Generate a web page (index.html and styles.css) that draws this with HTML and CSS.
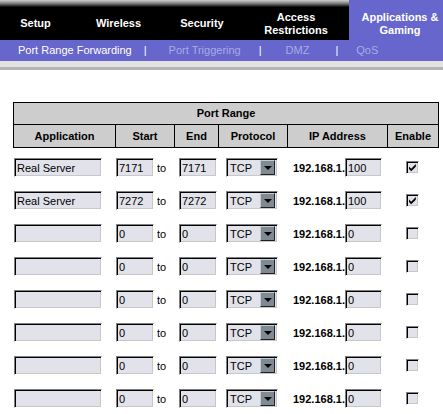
FILE: index.html
```html
<!DOCTYPE html>
<html lang="en">
<head>
    <meta charset="UTF-8">
    <title>Port Range Forwarding</title>
    <link rel="stylesheet" href="styles.css">
</head>
<body>

    <!-- 상단 메뉴 -->
    <div class="topnav">
        <div class="tab t1">Setup</div>
        <div class="tab t2">Wireless</div>
        <div class="tab t3">Security</div>
        <div class="tab t4">Access<br>Restrictions</div>
        <div class="tab active">Applications &amp;<br>Gaming</div>
    </div>
    <div class="subnav">
        <span class="item cur">Port Range Forwarding</span>
        <span class="sep s1">|</span>
        <span class="item i2">Port Triggering</span>
        <span class="sep s2">|</span>
        <span class="item i3">DMZ</span>
        <span class="sep s3">|</span>
        <span class="item i4">QoS</span>
    </div>
    <div class="strip"></div>

    <!-- 포트 포워딩 테이블 -->
    <div class="forward">
        <div class="head">
            <div class="title">Port Range</div>
            <div class="cols">
                <div>Application</div>
                <div>Start</div>
                <div>End</div>
                <div>Protocol</div>
                <div>IP Address</div>
                <div>Enable</div>
            </div>
        </div>
        <div id="rows"></div>
    </div>

    <script>
        const rules = [
            {app: "Real Server", start: "7171", end: "7171", ip: "100", on: true},
            {app: "Real Server", start: "7272", end: "7272", ip: "100", on: true},
            {app: "", start: "0", end: "0", ip: "0", on: false},
            {app: "", start: "0", end: "0", ip: "0", on: false},
            {app: "", start: "0", end: "0", ip: "0", on: false},
            {app: "", start: "0", end: "0", ip: "0", on: false},
            {app: "", start: "0", end: "0", ip: "0", on: false},
            {app: "", start: "0", end: "0", ip: "0", on: false}
        ];
        const tick = `<svg width="9" height="9" viewBox="0 0 9 9"><path d="M1 3.5 L3.2 5.7 L7.8 1 L7.8 3.8 L3.2 8.3 L1 6.1 Z" fill="#000"/></svg>`;

        let output = "";
        rules.forEach(r => {
            output += `<div class="row">
                <div class="c-app"><input class="field app" type="text" value="${r.app}"></div>
                <div class="c-start"><input class="field port" type="text" value="${r.start}"><span class="to">to</span></div>
                <div class="c-end"><input class="field port" type="text" value="${r.end}"></div>
                <div class="c-proto"><div class="select"><span class="val">TCP</span><span class="arrow"></span></div></div>
                <div class="c-ip"><b>192.168.1.</b><input class="field ip" type="text" value="${r.ip}"></div>
                <div class="c-en"><span class="check">${r.on ? tick : ""}</span></div>
            </div>`;
        });
        document.querySelector("#rows").innerHTML = output;
    </script>

</body>
</html>
```

FILE: styles.css
```css
html, body {
    overflow: hidden;
}
body {
    margin: 0;
    font-family: "Liberation Sans", Arial, sans-serif;
    font-size: 11px;
    background: #fff;
}

/* 상단 탭 */
.topnav {
    display: flex;
    height: 40px;
    width: 460px;
}
.tab {
    display: flex;
    justify-content: center;
    align-items: center;
    padding-top: 7px;
    box-sizing: border-box;
    color: #fff;
    font-weight: bold;
    line-height: 13px;
    text-align: center;
    background: linear-gradient(#d0d0d0 0, #8a8a8a 3px, #2a2a2a 6px, #000 7px);
}
.t1 { width: 71px; }
.t2 { width: 95px; }
.t3 { width: 72px; }
.t4 { width: 111px; padding-left: 5px; }
.tab.active {
    width: 102px;
    background: #6666cc;
}

.subnav {
    display: flex;
    height: 21px;
    line-height: 21px;
    background: #6666cc;
    color: #aaaae6;
    white-space: nowrap;
}
.subnav .cur {
    color: #fff;
    margin-left: 18px;
}
.sep { color: #fff; }
.s1 { margin-left: 12px; }
.i2 { margin-left: 22px; }
.s2 { margin-left: 18px; }
.i3 { margin-left: 24px; }
.s3 { margin-left: 26px; }
.i4 { margin-left: 18px; }

.strip {
    height: 6px;
    background: #e2e2e2;
    border-bottom: 3px solid #b4b4b4;
}

/* 테이블 */
.forward {
    margin: 32px 0 0 13px;
    width: 426px;
}
.head {
    border: 1px solid #000;
    background: #cdcdcd;
    font-weight: bold;
}
.title {
    height: 21px;
    line-height: 21px;
    text-align: center;
    border-bottom: 1px solid #000;
}
.cols {
    display: grid;
    grid-template-columns: 101px 59px 44px 69px 100px 51px;
    height: 22px;
    line-height: 22px;
    text-align: center;
}
.cols > div + div {
    border-left: 1px solid #000;
}

#rows {
    margin-top: 3px;
}
.row {
    display: grid;
    grid-template-columns: 101px 59px 44px 69px 100px 51px;
    height: 33px;
    padding-left: 1px;
}
.row > div {
    display: flex;
    align-items: center;
    box-sizing: border-box;
}
.c-start { padding-left: 1px; }
.c-end { padding-left: 5px; }
.c-proto { padding-left: 8px; }
.c-ip { padding-left: 6px; }
.c-en { padding-left: 19px; }

/* 입력 필드 (윈도우 inset 스타일) */
.field, .select, .check {
    box-sizing: border-box;
    background: #e2e2ea;
    border-top: 1px solid #808080;
    border-left: 1px solid #808080;
    border-right: 1px solid #fff;
    border-bottom: 1px solid #fff;
    box-shadow: inset 1px 1px 0 #000, inset -1px -1px 0 #c8c8c8;
}
.field {
    height: 19px;
    margin: 0;
    padding: 0 0 0 2px;
    font-family: "Liberation Sans", Arial, sans-serif;
    font-size: 11px;
    color: #000;
    outline: none;
}
.app { width: 88px; }
.port { width: 38px; }
.ip { width: 37px; }
.to { margin-left: 3px; }

.select {
    display: flex;
    align-items: center;
    width: 52px;
    height: 19px;
    padding: 2px 2px 2px 3px;
}
.val { flex: 1; }
.arrow {
    position: relative;
    width: 15px;
    height: 15px;
    box-sizing: border-box;
    background: #7f8a94;
    border-top: 1px solid #c4ccd2;
    border-left: 1px solid #c4ccd2;
    border-right: 1px solid #202020;
    border-bottom: 1px solid #202020;
}
/* 드롭다운 삼각형 */
.arrow::after {
    content: "";
    position: absolute;
    left: 3px;
    top: 5px;
    border-left: 4px solid transparent;
    border-right: 4px solid transparent;
    border-top: 4px solid #000;
}

.check {
    display: flex;
    justify-content: center;
    align-items: center;
    width: 13px;
    height: 13px;
}
```
